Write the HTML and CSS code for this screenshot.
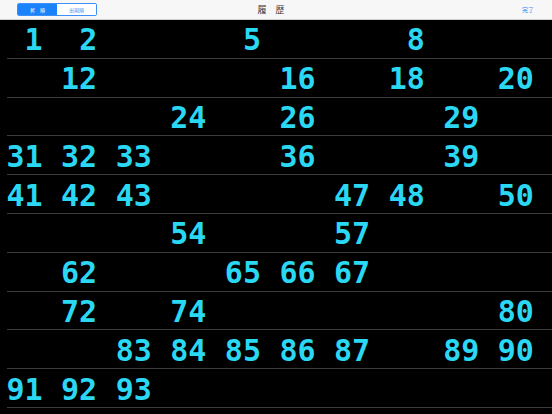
FILE: index.html
```html
<!DOCTYPE html>
<html lang="ja">
<head>
<meta charset="utf-8">
<link rel="stylesheet" href="styles.css">
</head>
<body>
<header class="nav">
  <div class="seg">
    <span class="seg-item active">昇　順</span>
    <span class="seg-item">出現順</span>
  </div>
  <div class="title">履　歴</div>
  <div class="done">完了</div>
</header>
<main class="board">
  <div class="row"><span>1</span><span>2</span><span></span><span></span><span>5</span><span></span><span></span><span>8</span><span></span><span></span></div>
  <div class="row"><span></span><span>12</span><span></span><span></span><span></span><span>16</span><span></span><span>18</span><span></span><span>20</span></div>
  <div class="row"><span></span><span></span><span></span><span>24</span><span></span><span>26</span><span></span><span></span><span>29</span><span></span></div>
  <div class="row"><span>31</span><span>32</span><span>33</span><span></span><span></span><span>36</span><span></span><span></span><span>39</span><span></span></div>
  <div class="row"><span>41</span><span>42</span><span>43</span><span></span><span></span><span></span><span>47</span><span>48</span><span></span><span>50</span></div>
  <div class="row"><span></span><span></span><span></span><span>54</span><span></span><span></span><span>57</span><span></span><span></span><span></span></div>
  <div class="row"><span></span><span>62</span><span></span><span></span><span>65</span><span>66</span><span>67</span><span></span><span></span><span></span></div>
  <div class="row"><span></span><span>72</span><span></span><span>74</span><span></span><span></span><span></span><span></span><span></span><span>80</span></div>
  <div class="row"><span></span><span></span><span>83</span><span>84</span><span>85</span><span>86</span><span>87</span><span></span><span>89</span><span>90</span></div>
  <div class="row"><span>91</span><span>92</span><span>93</span><span></span><span></span><span></span><span></span><span></span><span></span><span></span></div>
</main>
</body>
</html>
```
FILE: styles.css
```css
html, body {
  margin: 0;
  padding: 0;
  background: #000;
  height: 100%;
  overflow: hidden;
}

.nav {
  height: 20px;
  box-sizing: border-box;
  background: #f7f7f7;
  border-bottom: 1px solid #d0d0d0;
  display: grid;
  grid-template-columns: 1fr auto 1fr;
  align-items: center;
  font-family: "Noto Sans CJK JP", "Noto Sans", sans-serif;
}

.seg {
  justify-self: start;
  margin-left: 17px;
  display: flex;
  width: 80px;
  height: 13px;
  box-sizing: border-box;
  border: 1px solid #3d8ff7;
  border-radius: 2px;
  overflow: hidden;
}

.seg-item {
  flex: 1;
  display: flex;
  align-items: center;
  justify-content: center;
  font-size: 5px;
  color: #3d8ff7;
  background: #fff;
  line-height: 1;
}

.seg-item.active {
  background: #1a82fb;
  color: #fff;
}

.title {
  font-size: 9px;
  color: #333;
  padding-right: 10px;
  line-height: 1;
}

.done {
  justify-self: end;
  margin-right: 18px;
  font-size: 6px;
  color: #2d8cf7;
  line-height: 1;
}

.row {
  display: grid;
  grid-template-columns: repeat(10, 54.6px);
  height: 38.8px;
  box-sizing: border-box;
  padding-top: 2px;
  align-items: center;
  background: linear-gradient(#3c3c3c, #3c3c3c) no-repeat 7px 100% / calc(100% - 7px) 1px;
  font-family: "DejaVu Sans Mono", "Liberation Mono", monospace;
  font-weight: bold;
  font-size: 30px;
  color: #2bd8f4;
  line-height: 1;
}

.row span {
  text-align: right;
  padding-right: 12px;
}
```
